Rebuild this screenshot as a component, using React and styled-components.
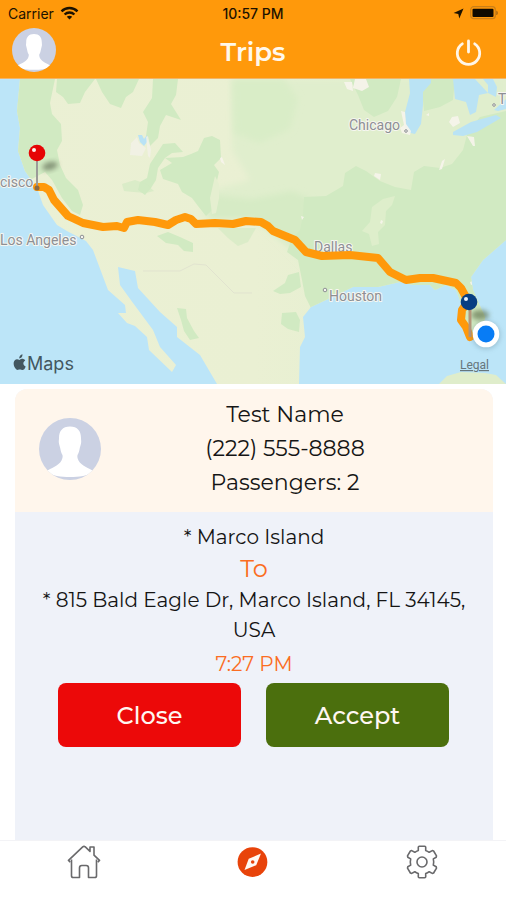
import React from "react";
import styled, { createGlobalStyle } from "styled-components";

const GlobalStyle = createGlobalStyle`
  *, *::before, *::after { box-sizing: border-box; }
  body {
    margin: 0;
    background: #ffffff;
    color: #151515;
    font-family: Montserrat, Inter, "Liberation Sans", sans-serif;
  }
`;

const Screen = styled.div`
  display: flex;
  flex-direction: column;
  min-height: 100vh;
`;

const Header = styled.header`
  background: #ff990b;
  border-bottom: 1px solid #f2b468;
`;

const StatusBar = styled.div`
  display: grid;
  grid-template-columns: 1fr auto 1fr;
  align-items: center;
  height: 26px;
  padding: 0 8px;
  font-family: Inter, "Liberation Sans", sans-serif;
  font-size: 14px;
  color: #1c1200;
`;

const StatusGroup = styled.div`
  display: flex;
  align-items: center;
  gap: 6px;
  justify-content: ${(p) => (p.$end ? "flex-end" : "flex-start")};
`;

const Clock = styled.time`
  font-weight: 500;
`;

const TitleBar = styled.div`
  display: grid;
  grid-template-columns: 1fr auto 1fr;
  align-items: center;
  height: 52px;
  padding: 0 12px 4px;
`;

const Title = styled.h1`
  margin: 0;
  padding-top: 4px;
  font-size: 26px;
  line-height: 36px;
  font-weight: 600;
  color: #fff8ec;
`;

const IconButton = styled.button`
  display: flex;
  padding: ${(p) => (p.$end ? "4px 12px 0" : "0")};
  border: 0;
  background: none;
  cursor: pointer;
  justify-self: ${(p) => (p.$end ? "end" : "start")};
`;

const MapView = styled.section`
  line-height: 0;
  svg { display: block; width: 100%; height: auto; }
`;

const TripCard = styled.main`
  display: flex;
  flex-direction: column;
  flex: 1;
  margin: 5px 13px 0 15px;
  border-radius: 12px 12px 0 0;
  overflow: hidden;
  background: #eff2f9;
`;

const Passenger = styled.section`
  display: grid;
  grid-template-columns: 62px 1fr;
  align-items: center;
  padding: 9px 24px 12px;
  background: #fff6ec;
`;

const PassengerInfo = styled.div`
  text-align: center;
  font-size: 22px;
  line-height: 34px;
  p { margin: 0; }
`;

const Trip = styled.section`
  display: flex;
  flex-direction: column;
  padding: 10px 20px;
  text-align: center;
`;

const Place = styled.p`
  margin: 0;
  font-size: 20px;
  line-height: 30px;
`;

const Toward = styled.p`
  margin: 0;
  font-size: 24px;
  line-height: 33px;
  color: #fb6d22;
`;

const PickupTime = styled.time`
  margin-top: 4px;
  font-size: 20px;
  line-height: 30px;
  color: #fb6d22;
`;

const Actions = styled.div`
  display: grid;
  grid-template-columns: 1fr 1fr;
  gap: 25px;
  padding: 4px 24px 0 23px;
`;

const ActionButton = styled.button`
  height: 64px;
  border: 0;
  border-radius: 8px;
  background: ${(p) => (p.$accept ? "#4b6f0d" : "#ec0909")};
  color: #fff7f2;
  font: 500 24px Montserrat, Inter, "Liberation Sans", sans-serif;
  cursor: pointer;
`;

const TabBar = styled.nav`
  display: grid;
  grid-template-columns: repeat(3, 1fr);
  height: 60px;
  border-top: 1px solid #f3f3f6;
  background: #ffffff;
`;

const Tab = styled.a`
  display: flex;
  justify-content: center;
  align-items: flex-start;
  padding-top: 4px;
`;

function Avatar({ size, id }) {
  return (
    <svg width={size} height={size} viewBox="0 0 62 62" aria-hidden="true">
      <defs>
        <clipPath id={id}><circle cx="31" cy="31" r="31" /></clipPath>
      </defs>
      <g clipPath={`url(#${id})`}>
        <rect width="62" height="62" fill="#cbd1e3" />
        <path d="M31 8.500C23.500 8.500 20 13 20 20c0 2-.5 3.500 0 5.500.4 2 1 3.500 1.300 5 .5 3 1.200 5 2.200 6.500 .5 2-.3 4-1 5.500C19.500 48 12 50 7 53.500 13 58 22 59 31 59s18-1 24-5.500C50 50 42.500 48 39.500 42.500c-.7-1.500-1.500-3.500-1-5.500 1-1.500 1.700-3.500 2.200-6.500.3-1.500.9-3 1.300-5 .5-2 0-3.500 0-5.500C42 13 38.500 8.500 31 8.500z" fill="#ffffff" />
      </g>
    </svg>
  );
}

const WifiIcon = () => (
  <svg width="19" height="14" viewBox="0 0 19 14" fill="none" stroke="#1c1200" strokeWidth="2.4" aria-hidden="true">
    <path d="M1.500 5.300C6 .8 13 .8 17.500 5.300M4.600 8.500c2.800-2.700 7-2.700 9.800 0" />
    <path d="M9.500 13.500 6.800 10.800c1.500-1.400 3.900-1.400 5.400 0z" fill="#1c1200" stroke="none" />
  </svg>
);

const LocationIcon = () => (
  <svg width="11" height="11" viewBox="0 0 11 11" aria-hidden="true">
    <path d="M10.500.5 6.300 10.500 5.300 5.900.6 5z" fill="#1c1200" />
  </svg>
);

const BatteryIcon = () => (
  <svg width="28" height="14" viewBox="0 0 28 14" aria-hidden="true">
    <rect x=".7" y=".7" width="24.600" height="12" rx="3" fill="none" stroke="#c97f18" strokeWidth="1.200" />
    <rect x="2.500" y="2.700" width="21" height="8.200" rx="1" fill="#0f0a00" />
    <path d="M26.300 4.500c2 .8 2 4 0 4.600z" fill="#a36412" />
  </svg>
);

const PowerIcon = () => (
  <svg width="27" height="27" viewBox="0 0 27 27" fill="none" stroke="#fff6e8" strokeWidth="2.800" strokeLinecap="round" aria-hidden="true">
    <path d="M7.300 4.800a11.200 11.200 0 1 0 12.400 0M13.500 2v11" />
  </svg>
);

const HomeIcon = () => (
  <svg width="34" height="34" viewBox="0 0 34 34" fill="none" stroke="#69696b" strokeWidth="1.600" strokeLinejoin="round" aria-hidden="true">
    <path d="M4.500 14.500v16.200q0 1.800 1.800 1.800h6.200v-9.700q0-2.300 2.300-2.300h4.400q2.300 0 2.300 2.300v9.700h6.200q1.800 0 1.800-1.800V14.500" />
    <path d="M3.300 17.200 1.500 15.400 15.700 1.900q1.300-1 2.600 0l4.700 4.500V2h4v8.200l5.500 5.200-1.800 1.800" />
  </svg>
);

const CompassIcon = () => (
  <svg width="34" height="34" viewBox="0 0 32 32" aria-hidden="true">
    <circle cx="15.500" cy="16" r="14" fill="#e8430a" />
    <path d="M23.500 8 19 19 8 23.500 12 13z" fill="#fff8f3" />
    <circle cx="15.700" cy="16" r="1.700" fill="#e8430a" />
  </svg>
);

const GearIcon = () => (
  <svg width="34" height="34" viewBox="0 0 34 34" fill="none" stroke="#69696b" strokeWidth="1.600" strokeLinejoin="round" aria-hidden="true">
    <path d="M14.300 1.200h5.400q1 0 1 1v3.200q2 .7 3.500 1.900l3.100-1.700 1.300.4 2.900 4.900-.3 1.300-2.900 1.700q.8 3 0 6.200l2.900 1.700.3 1.300-2.900 4.900-1.300.4-3.100-1.700q-1.500 1.200-3.500 1.900v3.200q0 1-1 1h-5.400q-1 0-1-1v-3.200q-2-.7-3.500-1.900l-3.100 1.700-1.300-.4-2.900-4.900.3-1.300 2.900-1.700q-.8-3.200 0-6.200l-2.900-1.700-.3-1.300 2.900-4.900 1.300-.4 3.100 1.700q1.500-1.200 3.500-1.900V2.200q0-1 1-1z" />
    <circle cx="17" cy="17" r="5" />
  </svg>
);

const MapLabel = styled.text`
  font-family: Roboto, "Liberation Sans", sans-serif;
  font-size: 14px;
  fill: #8d8f94;
  stroke: #f6f6f0;
  stroke-width: 2px;
  stroke-linejoin: round;
  paint-order: stroke;
`;

const MapBrand = styled.text`
  font-family: Inter, "Liberation Sans", sans-serif;
  font-size: 18px;
  fill: #435760;
`;

const LegalText = styled.text`
  font-family: Roboto, "Liberation Sans", sans-serif;
  font-size: 12px;
  fill: #66767c;
  text-decoration: underline;
`;

function RouteMap() {
  return (
    <svg viewBox="0 79 506 305" role="img" aria-label="Route from San Francisco to Marco Island">
      <defs>
        <linearGradient id="plains" x1="0" x2="1">
          <stop offset="0" stopColor="#ebf0d4" />
          <stop offset=".5" stopColor="#eaf0d3" />
          <stop offset="1" stopColor="#e2eecf" />
        </linearGradient>
        <filter id="soft" x="-50%" y="-50%" width="200%" height="200%"><feGaussianBlur stdDeviation="2.500" /></filter>
        <filter id="blend" x="-10%" y="-10%" width="120%" height="120%"><feGaussianBlur stdDeviation="3" /></filter>
        <clipPath id="land">
          <path d="M20 79 17 111l3 17-2 23 7 20 12 17 6 17 14 20 10 6 19 10 7 9 15 40 17 15 1 8h-8l9 10 8 3 12 11 2 13 23 22 4-7-16-18-7-17-20-27-13-18-2-18 17 4 3 17 22 24 17 15v10l23 18 17 29h82l1-37 5-10-2-20 8-10 15-7 27-13 25 0 22-5 13 3h17l5 5 11-5 10 5 5 13-1 14 6 20 7 2 10-9 2-13-12-27-2-13 12-17 23-20V79z" />
        </clipPath>
      </defs>
      <rect y="79" width="506" height="305" fill="#bce5f8" />
      <g clipPath="url(#land)">
        <rect y="79" width="506" height="305" fill="url(#plains)" />
        <path d="M232 79H506V190L310 270 272 232 256 216H200L214 190 250 180 232 150z" fill="#e0eecd" filter="url(#blend)" />
        <path d="M232 79h52l14 20-8 30-30 14-26-10z" fill="#d9edc7" filter="url(#blend)" />
        <path d="M212 195l40 4 40-8 18 8-4 54-34-20-18-14h-46z" fill="#d6ebc5" filter="url(#blend)" />
        <g fill="#d1eac2">
          <path d="M0 79H55L50 103 52 114 61 124 62 141 57 150 60 165 66 178 78 190 83 205 80 215 72 211 62 198 52 180 45 172 30 180 12 175z" />
          <path d="M57 79H95L85 92 80 103 68 104 63 97 56 92z" />
          <path d="M96 79H139L133 92 126 97 121 108 110 104 102 92z" />
          <path d="M153 79H178L176 95 171 104 181 120 166 115 160 126 158 138 150 146 146 136 148 122 143 112 152 98z" />
          <path d="M163 144 175 143 183 152 172 153 165 158 158 168 156 180 151 188 145 195 138 190 140 182 147 178 150 164z" />
          <path d="M165 158 183 157 191 154 198 151 204 138 212 136 220 140 221 158 214 165 219 172 216 185 218 196 216 206 206 216 198 206 192 198 182 192 178 184 163 179 160 170 172 163z" />
          <path d="M122 184 135 180 146 184 154 191 146 193 134 192 124 191z" opacity=".65" />
          <path d="M350 79H401L397 97 388 111 374 117 364 110 358 95z" />
          <path d="M421 79H455L453 100 440 107 424 111z" />
          <path d="M506 111 480 117 468 131 463 150 452 164 440 168 424 166 414 172 411 190 395 187 380 181 366 171 356 166 345 173 343 186 326 196 304 197 303 215 300 230 292 238 287 252 298 260 302 280 305 296 312 310 345 308 440 300 448 285 462 310 462 340H480L490 300 506 245z" />
          <path d="M157 236 168 232 180 237 193 243 193 252 184 251 178 245 166 243z" />
          <path d="M218 228H256L248 242 238 246 228 238z" opacity=".6" />
          <path d="M177 308 186 309 187 318 194 331 199 338 190 340 184 331 181 320z" />
          <path d="M282 313 296 312 300 320 299 332 288 329 281 324z" />
          <path d="M273 291 285 283 288 275 299 272 301 287 290 293 280 294z" />
        </g>
        <path d="M372 207 383 199 395 196 392 205 386 211 385 225 378 232 379 244 372 246 369 234 362 231 370 222z" fill="#deeecb" />
        <path d="M215 176 219 184 219 198 216 213 212 214 210 198z" fill="#e5efd0" />
        <path d="M138 135h4l2 4 3-4v7l-3 4-4-4z" fill="#b9e2f5" />
        <path d="M146 137l2-1 3 14-1 8-2-2zM131 143l6-6 2 6 7 5-4 8-12-1z" fill="#f3f2ea" opacity=".75" />
        <path d="M409 79h22v4l-8 9 0 13-2 19-6 10-9-2-1-20 5-19zM453 79h22l13 14v-8l-5-6h10l4 8-1 10-8-4-9 2-3 17-6 3-4-13-11-3zM453 132l18-10 25-7 5 3-24 14-14 4-10-1zM494 110l12-11v10l-8 2z" fill="#bae3f4" />
        <path d="M344 82l8 0 1 9-6-2zM355 79h11l3 8-7 4-9-3zM401 111l4 1 1 12 5 7-1 4-8-2-2-5 4-3zM375 173l6 1-1 6-6-4zM442 161l3-2-3 10-3 1zM452 117l6-1 2 7-7 4-4-5zM220 158l2-1 3 8-4-3zM467 136l7 1 1 9h-2zM301 216l3 1-2 3zM381 220l2 1-1 3-2-1zM426 115l3-2 0 3zM470 282l3-1 1 3-3 1z" fill="#f7f4ec" opacity=".9" />
        <path d="M143 271h37l14-7 12 1 28 28h18" fill="none" stroke="#e1e3cf" strokeWidth="1" />
      </g>
      <path d="m439 384 8-8 14-4 24 1 11 2 10 9z" fill="#dfedcb" />

      <MapLabel x="0" y="187">cisco</MapLabel>
      <MapLabel x="0" y="245">Los Angeles</MapLabel>
      <MapLabel x="349" y="130">Chicago</MapLabel>
      <MapLabel x="314" y="252">Dallas</MapLabel>
      <MapLabel x="329" y="301">Houston</MapLabel>
      <MapLabel x="498" y="104">T</MapLabel>
      <g fill="#f5f5ef" stroke="#8d8f94" strokeWidth="1">
        <circle cx="82" cy="237" r="1.800" />
        <circle cx="325" cy="290" r="1.800" />
        <circle cx="406" cy="131" r="1.300" />
        <circle cx="494" cy="105" r="1.300" />
      </g>

      <path
        d="M37 187 44 187 49 190 54 200 68 216 83 223 103 227 117 226 124 228 127 222 138 220 155 222 168 225 176 220 185 217 191 219 196 224 215 223 233 224 246 221 261 222 268 226 273 231 295 240 306 252 322 256 350 255 378 258 390 272 406 280 420 278 433 278 456 283 461 288 468 301 462 310 461 320 466 327 470 337"
        fill="none" stroke="#ff990b" strokeWidth="8" strokeLinecap="round" strokeLinejoin="round"
      />

      <ellipse cx="50" cy="166" rx="8" ry="4" fill="#5c6650" opacity=".65" filter="url(#soft)" transform="rotate(-15 50 166)" />
      <path d="M37 160v27" stroke="#9b9b98" strokeWidth="2" />
      <circle cx="37" cy="188" r="2.500" fill="#8c6b43" />
      <circle cx="37" cy="153" r="8.300" fill="#e60505" />
      <circle cx="34" cy="150" r="2" fill="#fff2ee" />

      <ellipse cx="480" cy="315" rx="9" ry="5" fill="#65764f" opacity=".7" filter="url(#soft)" />
      <path d="M470 308v29" stroke="#b5957a" strokeWidth="3" />
      <circle cx="469" cy="302" r="8.300" fill="#073e82" />
      <circle cx="466" cy="299" r="2" fill="#e9f3ff" />
      <circle cx="486" cy="335" r="14" fill="#557789" opacity=".35" filter="url(#soft)" />
      <circle cx="486" cy="334" r="13.300" fill="#ffffff" />
      <circle cx="486" cy="334" r="8.500" fill="#087cf5" />

      <g fill="#435760">
        <path d="M19.600 360c1-1 2.300-1.500 3.800-.9.900.3 1.400.8 1.800 1.300-2.700 1.600-2.300 4.900.5 6-1 2.700-2.300 4.200-4.300 3.400-1.200-.5-2-.5-3.200 0-2.300.9-5-3.700-4.500-7.200.5-3.200 3-4.400 5.900-2.600z" />
        <path d="M19.200 358.400c0-2 1.200-3.700 3.300-4.200.1 2.400-1.200 4-3.300 4.200z" />
      </g>
      <MapBrand x="27" y="370">Maps</MapBrand>
      <a href="#legal"><LegalText x="460" y="369">Legal</LegalText></a>
    </svg>
  );
}

export default function App() {
  return (
    <>
      <GlobalStyle />
      <Screen>
        <Header>
          <StatusBar>
            <StatusGroup><span>Carrier</span><WifiIcon /></StatusGroup>
            <Clock>10:57 PM</Clock>
            <StatusGroup $end><LocationIcon /><BatteryIcon /></StatusGroup>
          </StatusBar>
          <TitleBar>
            <IconButton type="button" aria-label="Profile"><Avatar size={44} id="profile-avatar" /></IconButton>
            <Title>Trips</Title>
            <IconButton type="button" $end aria-label="Sign off"><PowerIcon /></IconButton>
          </TitleBar>
        </Header>
        <MapView><RouteMap /></MapView>
        <TripCard>
          <Passenger>
            <Avatar size={62} id="passenger-avatar" />
            <PassengerInfo>
              <p>Test Name</p>
              <p>(222) 555-8888</p>
              <p>Passengers: 2</p>
            </PassengerInfo>
          </Passenger>
          <Trip>
            <Place>* Marco Island</Place>
            <Toward>To</Toward>
            <Place>* 815 Bald Eagle Dr, Marco Island, FL 34145, USA</Place>
            <PickupTime>7:27 PM</PickupTime>
            <Actions>
              <ActionButton type="button">Close</ActionButton>
              <ActionButton type="button" $accept>Accept</ActionButton>
            </Actions>
          </Trip>
        </TripCard>
        <TabBar aria-label="Main">
          <Tab href="#home" aria-label="Home"><HomeIcon /></Tab>
          <Tab href="#trips" aria-label="Trips" aria-current="page"><CompassIcon /></Tab>
          <Tab href="#settings" aria-label="Settings"><GearIcon /></Tab>
        </TabBar>
      </Screen>
    </>
  );
}
